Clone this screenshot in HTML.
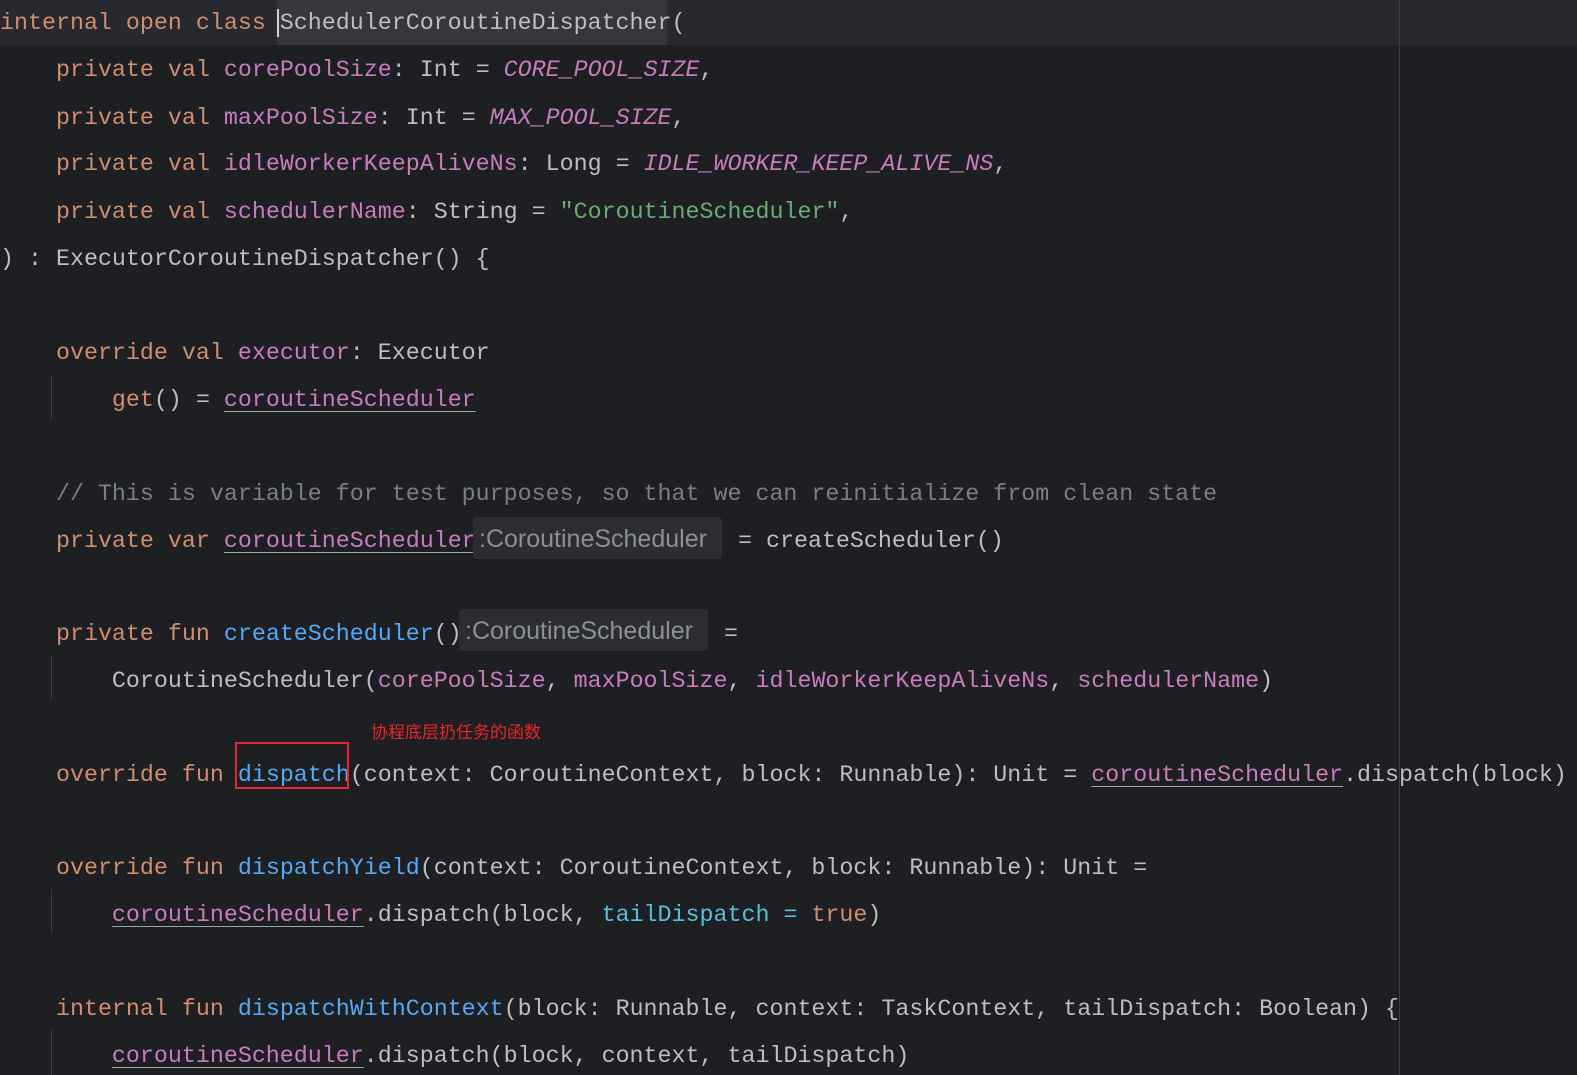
<!DOCTYPE html>
<html><head><meta charset="utf-8"><style>
html,body{margin:0;padding:0;background:#1e1f22;width:1577px;height:1075px;overflow:hidden;position:relative}
.l{position:absolute;left:0;height:46px;line-height:46px;font-family:"Liberation Mono",monospace;font-size:23.32px;color:#bcbec4;white-space:pre}
.k{color:#cf8e6d}.p{color:#c77dbb}.f{color:#56a8f5}.s{color:#6aab73}.c{color:#7a7e85}.n{color:#56c1d6}.i{font-style:italic;color:#c77dbb}
.u{text-decoration:underline;text-decoration-color:#a0a2a8;text-underline-offset:5px;text-decoration-thickness:1px}
.hint{position:absolute;background:#2b2d30;color:#8c8f94;font-family:"Liberation Sans",sans-serif;font-size:25px;line-height:44px;height:42px;border-radius:4px;padding:0 6px;white-space:pre;box-sizing:border-box}
.g{position:absolute;left:51px;width:1px;background:#393b40}
</style></head><body>
<div style="position:absolute;left:0;top:0;width:1577px;height:45px;background:#27292e"></div>
<div style="position:absolute;left:277px;top:0;width:390px;height:45px;background:#35373b"></div>
<div style="position:absolute;left:1399px;top:0;width:1px;height:1075px;background:#3c3e43"></div>
<div style="position:absolute;left:277px;top:9px;width:2px;height:28px;background:#ced0d6"></div>
<div class="g" style="top:375px;height:45px"></div>
<div class="g" style="top:655px;height:45px"></div>
<div class="g" style="top:889px;height:45px"></div>
<div class="g" style="top:1029px;height:46px"></div>

<div class="l" style="top:1px"><span class="k">internal open class </span>SchedulerCoroutineDispatcher(</div>
<div class="l" style="top:48px">    <span class="k">private val </span><span class="p">corePoolSize</span>: Int = <span class="i">CORE_POOL_SIZE</span>,</div>
<div class="l" style="top:96px">    <span class="k">private val </span><span class="p">maxPoolSize</span>: Int = <span class="i">MAX_POOL_SIZE</span>,</div>
<div class="l" style="top:142px">    <span class="k">private val </span><span class="p">idleWorkerKeepAliveNs</span>: Long = <span class="i">IDLE_WORKER_KEEP_ALIVE_NS</span>,</div>
<div class="l" style="top:190px">    <span class="k">private val </span><span class="p">schedulerName</span>: String = <span class="s">"CoroutineScheduler"</span>,</div>
<div class="l" style="top:237px">) : ExecutorCoroutineDispatcher() {</div>
<div class="l" style="top:331px">    <span class="k">override val </span><span class="p">executor</span>: Executor</div>
<div class="l" style="top:378px">        <span class="k">get</span>() = <span class="p u">coroutineScheduler</span></div>
<div class="l" style="top:472px">    <span class="c">// This is variable for test purposes, so that we can reinitialize from clean state</span></div>
<div class="l" style="top:519px">    <span class="k">private var </span><span class="p u">coroutineScheduler</span></div>
<div class="hint" style="left:473px;top:517px;width:249px">:CoroutineScheduler</div>
<div class="l" style="top:519px;left:738px">= createScheduler()</div>
<div class="l" style="top:612px">    <span class="k">private fun </span><span class="f">createScheduler</span>()</div>
<div class="hint" style="left:459px;top:609px;width:249px">:CoroutineScheduler</div>
<div class="l" style="top:612px;left:724px">=</div>
<div class="l" style="top:659px">        CoroutineScheduler(<span class="p">corePoolSize</span>, <span class="p">maxPoolSize</span>, <span class="p">idleWorkerKeepAliveNs</span>, <span class="p">schedulerName</span>)</div>
<div style="position:absolute;left:371px;top:719px;font-family:'Noto Sans CJK SC',sans-serif;font-size:17px;line-height:24px;color:#e8262b">协程底层扔任务的函数</div>
<div class="l" style="top:753px">    <span class="k">override fun </span><span class="f">dispatch</span>(context: CoroutineContext, block: Runnable): Unit = <span class="p u">coroutineScheduler</span>.dispatch(block)</div>
<div style="position:absolute;left:235px;top:742px;width:110px;height:43px;border:2px solid #e8262b"></div>
<div class="l" style="top:846px">    <span class="k">override fun </span><span class="f">dispatchYield</span>(context: CoroutineContext, block: Runnable): Unit =</div>
<div class="l" style="top:893px">        <span class="p u">coroutineScheduler</span>.dispatch(block, <span class="n">tailDispatch =</span> <span class="k">true</span>)</div>
<div class="l" style="top:987px">    <span class="k">internal fun </span><span class="f">dispatchWithContext</span>(block: Runnable, context: TaskContext, tailDispatch: Boolean) {</div>
<div class="l" style="top:1034px">        <span class="p u">coroutineScheduler</span>.dispatch(block, context, tailDispatch)</div>
</body></html>
